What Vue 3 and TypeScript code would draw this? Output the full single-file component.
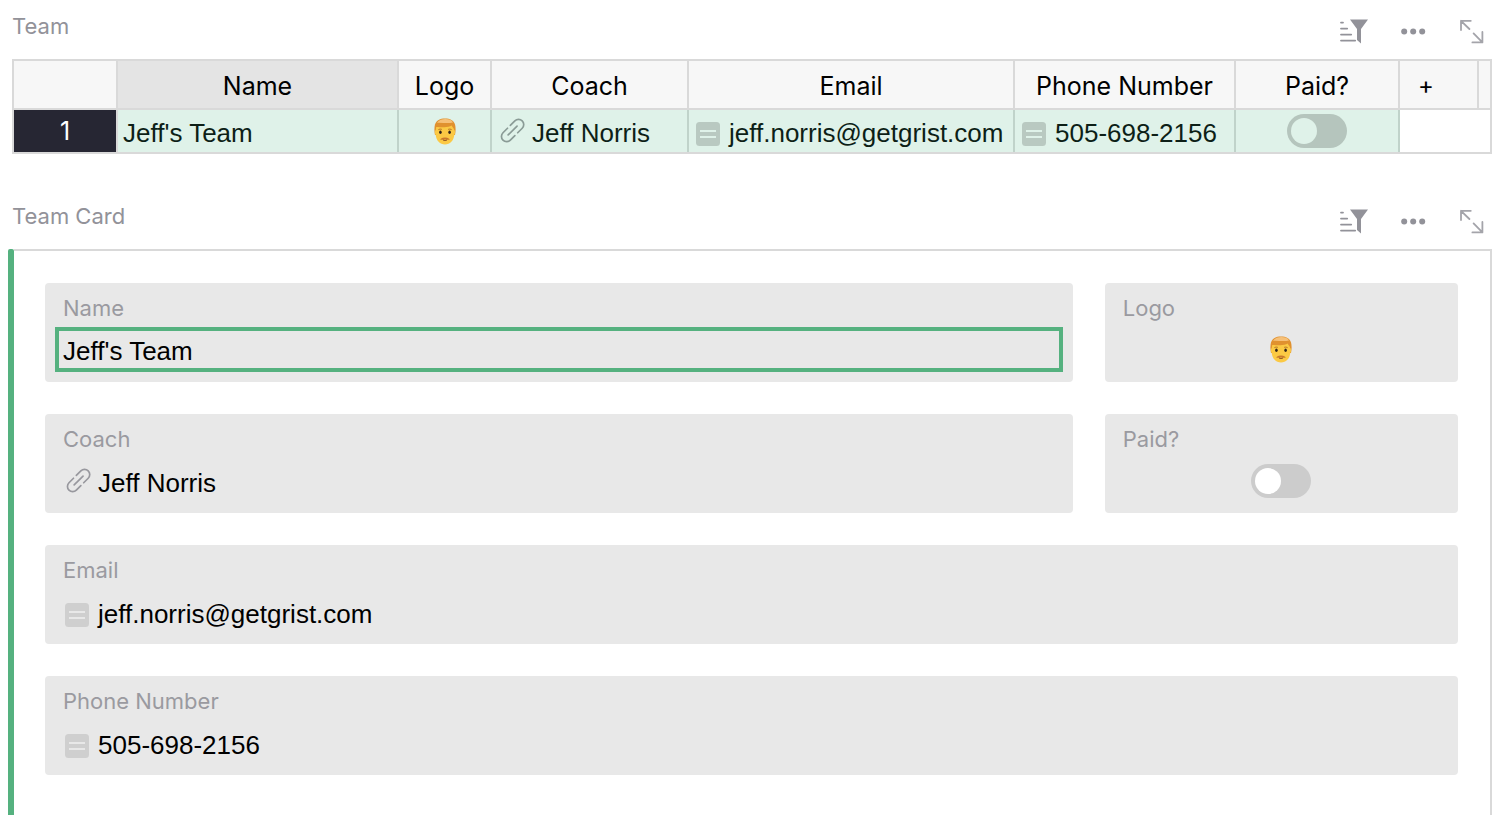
<script setup lang="ts">
import { defineComponent, h, ref } from 'vue'

interface Team {
  id: number
  name: string
  coach: string
  email: string
  phone: string
}

const team = ref<Team>({
  id: 1,
  name: "Jeff's Team",
  coach: 'Jeff Norris',
  email: 'jeff.norris@getgrist.com',
  phone: '505-698-2156',
})
const paid = ref(false)

const columns = [
  { key: 'name', title: 'Name' },
  { key: 'logo', title: 'Logo' },
  { key: 'coach', title: 'Coach' },
  { key: 'email', title: 'Email' },
  { key: 'phone', title: 'Phone Number' },
  { key: 'paid', title: 'Paid?' },
]

const LinkIcon = defineComponent(() => () =>
  h('svg', { width: 26, height: 32, viewBox: '0 0 26 32', fill: 'none', 'stroke-width': 1.7, 'stroke-linecap': 'round', 'aria-hidden': 'true' }, [
    h('g', { class: 'link-lines', transform: 'translate(13.6 15.5) rotate(-45)' }, [
      h('path', { d: 'M2 -5.2 H8.4 A5.2 5.2 0 0 1 8.4 5.2 H2' }),
      h('path', { d: 'M-2 -5.2 H-8.4 A5.2 5.2 0 0 0 -8.4 5.2 H-2' }),
      h('path', { d: 'M-6.3 0 H6.3' }),
    ]),
  ]),
)

const NoteIcon = defineComponent(() => () =>
  h('svg', { width: 26, height: 32, viewBox: '0 0 26 32', 'aria-hidden': 'true' }, [
    h('rect', { class: 'note-box', x: 0, y: 7, width: 24, height: 24, rx: 3.5 }),
    h('path', { class: 'note-lines', d: 'M4 16 H20 M4 22 H20', 'stroke-width': 1.8 }),
  ]),
)

const FaceIcon = defineComponent(() => () =>
  h('svg', { width: 22, height: 27, viewBox: '0 0 22 27', role: 'img', 'aria-label': 'Man with red hair' }, [
    h('path', { fill: '#e0912f', d: 'M1 17 C0.2 13 0.2 9 1 6.4 C2.4 2.2 6 0.4 11 0.4 C16 0.4 19.6 2.2 21 6.4 C21.8 9 21.8 13 21 17 Z' }),
    h('path', { fill: '#fbc944', d: 'M2.2 9 C7 9 14.6 10.2 17.6 7.6 C18.6 9.6 19.8 10.4 20.2 12 C21.4 12.6 21.2 16 20.3 16.8 C19.8 22.6 16 26.6 11 26.6 C6 26.6 2.2 22.6 1.7 16.8 C0.8 16 0.6 12.6 1.8 12 Z' }),
    h('path', { fill: '#f6c078', d: 'M3 4.8 C5 1.8 8 1 11.4 1 C15 1 17.8 2 19 4.4 C14 5.8 8 4.4 3 4.8 Z' }),
    h('path', { stroke: '#b9772a', 'stroke-width': 1, 'stroke-linecap': 'round', fill: 'none', d: 'M4.7 11.4 Q6 10.6 7.5 11.2 M14.5 11.2 Q16 10.6 17.3 11.4' }),
    h('ellipse', { fill: '#31241b', cx: 6.4, cy: 14.2, rx: 1.3, ry: 1.7 }),
    h('ellipse', { fill: '#31241b', cx: 15.6, cy: 14.2, rx: 1.3, ry: 1.7 }),
    h('path', { fill: '#c9782c', d: 'M6 21.2 C7.6 20.6 9 19.2 11 19.7 C13 19.2 14.4 20.6 16 21.2 C14.4 22 12.4 21.8 11 21.3 C9.6 21.8 7.6 22 6 21.2 Z' }),
    h('path', { stroke: '#8a4a1c', 'stroke-width': 1, 'stroke-linecap': 'round', d: 'M9.4 22.2 Q11 22.8 12.6 22.2', fill: 'none' }),
  ]),
)

const SectionTools = defineComponent({
  props: { section: { type: String, required: true } },
  setup(props) {
    return () =>
      h('div', { class: 'tools' }, [
        h('button', { type: 'button', 'aria-label': `Sort and filter ${props.section}` }, [
          h('svg', { width: 28, height: 26, viewBox: '0 0 28 26', fill: '#929299' }, [
            h('path', { d: 'M10 0.6 H28 L21 10 V24.4 L17 21 V10 Z' }),
            h('path', { stroke: '#929299', 'stroke-width': 1.8, 'stroke-linecap': 'round', d: 'M1 3.6 H3 M1 9.6 H7.2 M1 15.6 H11.2 M1 21.6 H15.2' }),
          ]),
        ]),
        h('button', { type: 'button', 'aria-label': `${props.section} options` }, [
          h('svg', { width: 26, height: 26, viewBox: '0 0 26 26', fill: '#929299' }, [
            h('circle', { cx: 3.2, cy: 12.5, r: 3 }),
            h('circle', { cx: 12.2, cy: 12.5, r: 3 }),
            h('circle', { cx: 21.2, cy: 12.5, r: 3 }),
          ]),
        ]),
        h('button', { type: 'button', 'aria-label': `Expand ${props.section}` }, [
          h('svg', { width: 24, height: 26, viewBox: '0 0 24 26', fill: 'none', stroke: '#a4a4aa', 'stroke-width': 1.8, 'stroke-linecap': 'round', 'stroke-linejoin': 'round' }, [
            h('path', { d: 'M1 11 V1.8 H10.8 M1 1.8 L9.4 10' }),
            h('path', { d: 'M13.6 14.4 L22.4 23.4 M22.4 13 V23.4 H12.4' }),
          ]),
        ]),
      ])
  },
})
</script>

<template>
  <main class="page">
    <section class="grid-section">
      <header class="section-head">
        <h2>Team</h2>
        <SectionTools section="Team" />
      </header>
      <table>
        <colgroup>
          <col class="c-num" />
          <col v-for="c in columns" :key="c.key" :class="'c-' + c.key" />
          <col class="c-add" />
          <col />
        </colgroup>
        <thead>
          <tr>
            <td></td>
            <th v-for="c in columns" :key="c.key" scope="col" :class="{ current: c.key === 'name' }">{{ c.title }}</th>
            <td><button type="button" class="add" aria-label="Add column">+</button></td>
            <td class="last"></td>
          </tr>
        </thead>
        <tbody>
          <tr>
            <th scope="row">{{ team.id }}</th>
            <td><div class="cell"><span class="text">{{ team.name }}</span></div></td>
            <td><div class="cell center"><FaceIcon /></div></td>
            <td><div class="cell"><LinkIcon class="icon" /><span class="text">{{ team.coach }}</span></div></td>
            <td><div class="cell"><NoteIcon class="icon" /><span class="text">{{ team.email }}</span></div></td>
            <td><div class="cell"><NoteIcon class="icon" /><span class="text">{{ team.phone }}</span></div></td>
            <td><div class="cell center"><input v-model="paid" type="checkbox" class="switch" aria-label="Paid?" /></div></td>
            <td colspan="2" class="empty"></td>
          </tr>
        </tbody>
      </table>
    </section>

    <section class="card-section">
      <header class="section-head">
        <h2>Team Card</h2>
        <SectionTools section="Team Card" />
      </header>
      <div class="card-body">
        <div class="active-bar"></div>
        <div class="fields">
          <div class="field">
            <label for="team-name">Name</label>
            <input id="team-name" v-model="team.name" type="text" class="value" />
          </div>
          <div class="field">
            <span class="label">Logo</span>
            <div class="value center"><FaceIcon /></div>
          </div>
          <div class="field">
            <span class="label">Coach</span>
            <div class="value"><LinkIcon class="icon" /><span class="text">{{ team.coach }}</span></div>
          </div>
          <div class="field">
            <label for="team-paid">Paid?</label>
            <div class="value center"><input id="team-paid" v-model="paid" type="checkbox" class="switch" /></div>
          </div>
          <div class="field wide">
            <span class="label">Email</span>
            <div class="value"><NoteIcon class="icon" /><span class="text">{{ team.email }}</span></div>
          </div>
          <div class="field wide">
            <span class="label">Phone Number</span>
            <div class="value"><NoteIcon class="icon" /><span class="text">{{ team.phone }}</span></div>
          </div>
        </div>
      </div>
    </section>
  </main>
</template>

<style>
body {
  background: #fff;
}
</style>

<style scoped>
.page {
  --line: #d9d9d9;
  --muted: #929299;
  --link: #98989e;
  --note: #cfcfcf;
  --note-line: #e8e8e8;
  --track: #ccc;
  --knob: #fff;
  display: flex;
  flex-direction: column;
  gap: 36px;
  min-height: 100vh;
  padding: 0 8px;
  box-sizing: border-box;
  font-family: Inter, "Liberation Sans", sans-serif;
}

.section-head {
  display: flex;
  justify-content: space-between;
  height: 59px;
  padding-left: 4px;
}

h2 {
  margin: 0;
  font-size: 22px;
  font-weight: 400;
  line-height: 52px;
  color: var(--muted);
}

.section-head :deep(.tools) {
  display: flex;
  align-items: center;
  gap: 33px;
  padding: 4px 8px 0 0;
}

button,
.section-head :deep(button) {
  display: block;
  padding: 0;
  border: 0;
  background: none;
  cursor: pointer;
}

svg,
:deep(svg) {
  display: block;
  flex: none;
}

.grid-section table {
  width: calc(100% - 4px);
  margin-left: 4px;
  table-layout: fixed;
  border-collapse: separate;
  border-spacing: 0;
  border: 2px solid var(--line);
}

.c-num { width: 104px; }
.c-name { width: 281px; }
.c-logo { width: 93px; }
.c-coach { width: 197px; }
.c-email { width: 326px; }
.c-phone { width: 221px; }
.c-paid { width: 164px; }
.c-add { width: 79px; }

th,
td {
  box-sizing: border-box;
  padding: 0;
  border-right: 2px solid var(--line);
  font-weight: 400;
  white-space: nowrap;
}

thead th,
thead td {
  height: 49px;
  padding-top: 2px;
  border-bottom: 2px solid var(--line);
  background: #f7f7f7;
  font-size: 25px;
  line-height: 30px;
  text-align: center;
}

thead th.current {
  background: #e4e4e4;
}

thead .last,
.empty {
  border-right: 0;
}

.add {
  padding-left: 18px;
  font: 400 24px/30px Inter, sans-serif;
  color: #000;
}

tbody th {
  background: #262633;
  color: #fff;
  font-size: 25px;
}

tbody td:not(.empty) {
  background: #dff2e9;
  border-right-color: #c0d3ca;
}

tbody tr {
  --link: #8a9b96;
  --note: #b9c9c1;
  --note-line: #dff2e9;
  --track: #b5c5bd;
  --knob: #dff2e9;
}

.cell {
  display: flex;
  align-items: center;
  height: 42px;
  padding-left: 5px;
  font-family: "Liberation Sans", Arial, sans-serif;
  font-size: 26px;
  color: #0d1f17;
}

.text {
  padding-top: 4px;
  line-height: 30px;
  white-space: nowrap;
}

.icon {
  margin: 0 7px 0 2px;
}

:deep(.link-lines) {
  stroke: var(--link);
}

:deep(.note-box) {
  fill: var(--note);
}

:deep(.note-lines) {
  stroke: var(--note-line);
}

.center {
  justify-content: center;
  padding: 0;
}

.switch {
  appearance: none;
  display: flex;
  align-items: center;
  box-sizing: border-box;
  width: 60px;
  height: 34px;
  margin: 0;
  padding: 4px;
  border-radius: 17px;
  background: var(--track);
  cursor: pointer;
}

.switch::before {
  content: "";
  width: 26px;
  height: 26px;
  border-radius: 50%;
  background: var(--knob);
}

.switch:checked {
  justify-content: flex-end;
  background: #16b378;
}

.card-section {
  display: flex;
  flex-direction: column;
  flex: 1;
}

.card-body {
  display: flex;
  flex: 1;
}

.active-bar {
  width: 6px;
  border-radius: 2px 2px 0 0;
  background: #55b17f;
}

.fields {
  display: grid;
  grid-template-columns: minmax(0, 1fr) 25%;
  align-content: start;
  gap: 32px;
  flex: 1;
  padding: 32px 32px 32px 31px;
  border-top: 2px solid var(--line);
  border-right: 2px solid var(--line);
}

.field {
  display: flex;
  flex-direction: column;
  gap: 4px;
  padding: 10px;
  border-radius: 4px;
  background: #e8e8e8;
}

.wide {
  grid-column: 1 / -1;
}

label,
.label {
  padding-left: 8px;
  font-size: 22px;
  line-height: 30px;
  color: #9a9aa0;
}

.value {
  display: flex;
  align-items: center;
  box-sizing: border-box;
  height: 45px;
  padding: 0 8px;
  font-family: "Liberation Sans", Arial, sans-serif;
  font-size: 26px;
  color: #000;
}

.value.center {
  padding: 0;
}

input.value {
  width: 100%;
  margin: 0;
  padding: 3px 4px 0;
  border: 4px solid #55b17f;
  border-radius: 0;
  outline: none;
  background: transparent;
}
</style>
